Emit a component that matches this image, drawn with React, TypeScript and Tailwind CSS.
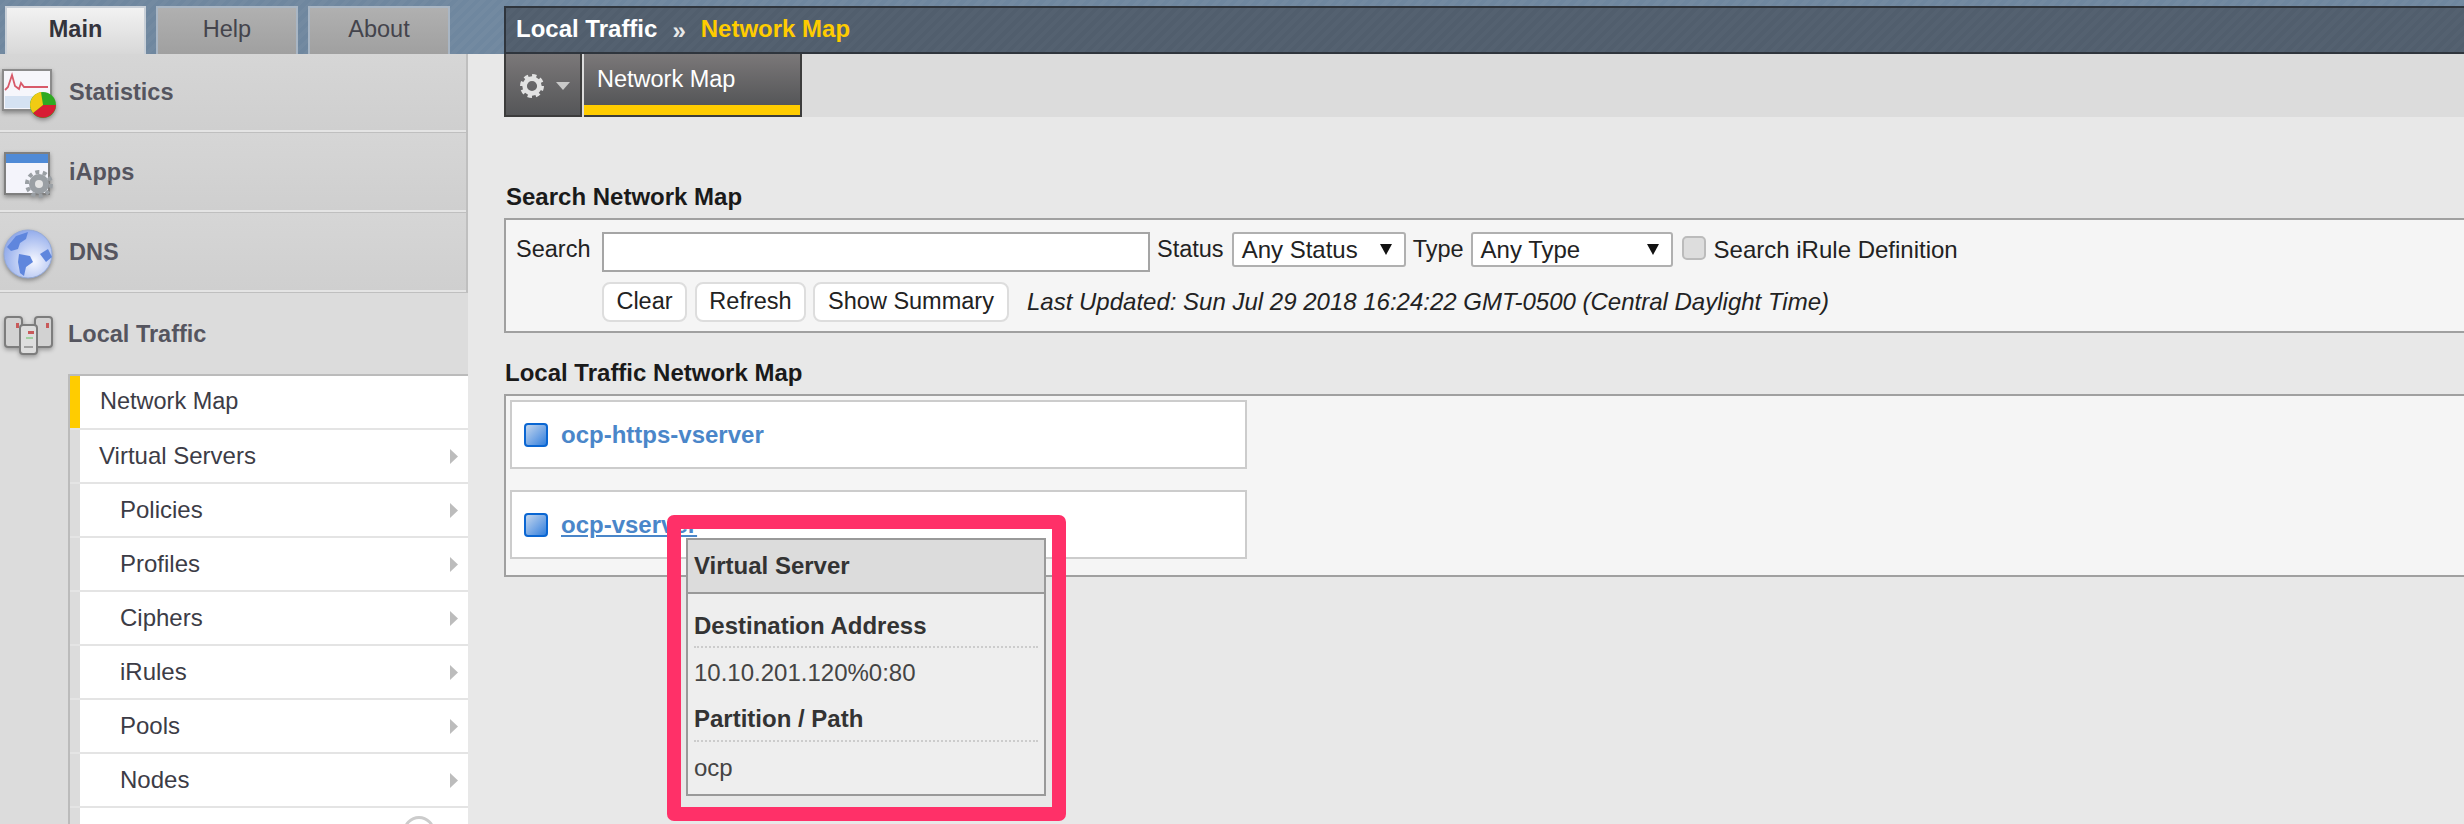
const font = "font-['Liberation_Sans',Arial,sans-serif]";

const stripes =
  "bg-[repeating-linear-gradient(135deg,#6f879f_0px,#6f879f_4px,#738aa1_4px,#738aa1_8px)]";
const headStripes =
  "bg-[repeating-linear-gradient(135deg,#515e6d_0px,#515e6d_4px,#546170_4px,#546170_8px)]";

const navItems = ["Policies", "Profiles", "Ciphers", "iRules", "Pools", "Nodes"];

function StatsIcon() {
  return (
    <svg width="58" height="52" viewBox="0 0 58 52" className="shrink-0 drop-shadow-[0_2px_2px_rgba(0,0,0,0.35)]">
      <rect x="3" y="3" width="48" height="40" fill="#f6f6fb" stroke="#8b8b8b" strokeWidth="2" />
      <rect x="5" y="29" width="44" height="12" fill="#d5e2f2" />
      <path d="M5 23 L8 20 L12 8 L15 19 L19 22 L21 16 L24 20 L48 20" fill="none" stroke="#d85a6a" strokeWidth="1.8" />
      <circle cx="43" cy="38" r="13" fill="#2faa22" />
      <path d="M43 38 L56 38 A13 13 0 0 1 33 46 Z" fill="#d81c34" />
      <path d="M43 38 L33 46 A13 13 0 0 1 41 25 Z" fill="#f1cb14" />
    </svg>
  );
}

function AppsIcon() {
  return (
    <svg width="58" height="52" viewBox="0 0 58 52" className="shrink-0 drop-shadow-[0_2px_2px_rgba(0,0,0,0.35)]">
      <rect x="5" y="6" width="44" height="41" fill="#f4f4fb" stroke="#7f7f7f" strokeWidth="2" />
      <rect x="6" y="7" width="42" height="9" fill="#4f8ad6" />
      <circle cx="39" cy="37" r="10" fill="#9a9fa4" />
      <circle cx="39" cy="37" r="12" fill="none" stroke="#9a9fa4" strokeWidth="4" strokeDasharray="4 3.5" />
      <circle cx="39" cy="37" r="4" fill="#e4e4e4" />
    </svg>
  );
}

function GlobeIcon() {
  return (
    <svg width="58" height="52" viewBox="0 0 58 52" className="shrink-0 drop-shadow-[0_2px_2px_rgba(0,0,0,0.35)]">
      <defs>
        <radialGradient id="globe" cx="0.62" cy="0.65" r="0.7">
          <stop offset="0" stopColor="#f5f7ff" />
          <stop offset="1" stopColor="#8ba6ea" />
        </radialGradient>
      </defs>
      <circle cx="28" cy="27" r="24" fill="url(#globe)" stroke="#93a9d8" strokeWidth="1" />
      <path d="M7 20 L16 9 L28 5 L26 12 L20 16 L18 22 L11 24 Z" fill="#5f86dd" />
      <path d="M19 27 L30 29 L33 35 L26 40 L24 49 L20 46 L18 35 Z" fill="#5f86dd" />
      <path d="M40 27 L48 22 L52 30 L46 35 Z" fill="#5f86dd" />
    </svg>
  );
}

function ServersIcon() {
  return (
    <svg width="58" height="52" viewBox="0 0 58 52" className="shrink-0 drop-shadow-[0_2px_2px_rgba(0,0,0,0.3)]">
      <rect x="5" y="8" width="17" height="30" rx="3" fill="#d2d2d2" stroke="#7d7d7d" strokeWidth="2" />
      <rect x="35" y="8" width="17" height="30" rx="3" fill="#d2d2d2" stroke="#7d7d7d" strokeWidth="2" />
      <rect x="20" y="16" width="17" height="29" rx="3" fill="#dedede" stroke="#7d7d7d" strokeWidth="2" />
      <rect x="16" y="14" width="3" height="5" fill="#c85a5a" />
      <rect x="46" y="14" width="3" height="5" fill="#c85a5a" />
      <rect x="28" y="22" width="6" height="3" fill="#c85a5a" />
      <rect x="26" y="28" width="7" height="2" fill="#9fcf9f" />
      <rect x="24" y="37" width="9" height="2" fill="#a0a0a0" />
    </svg>
  );
}

function GearIcon() {
  return (
    <svg width="24" height="24" viewBox="0 0 26 26">
      <circle cx="13" cy="13" r="8" fill="none" stroke="#e2e2e2" strokeWidth="5" />
      <circle cx="13" cy="13" r="11" fill="none" stroke="#e2e2e2" strokeWidth="4" strokeDasharray="4.6 4" />
    </svg>
  );
}

function SideItem({ label, icon, height }: { label: string; icon: React.ReactNode; height: string }) {
  return (
    <div className={`border-b border-r-2 border-[#bfbfbf] ${height}`}>
      <div className="flex h-full items-center border-b-2 border-[#e4e4e4] bg-gradient-to-b from-[#d6d6d6] to-[#cfcfcf] pt-[2px]">
        {icon}
        <span className="ml-[11px] text-[23.5px] font-bold text-[#55555f]">{label}</span>
      </div>
    </div>
  );
}

function NavRow({ label, indent, active }: { label: string; indent?: boolean; active?: boolean }) {
  return (
    <div className="flex h-[54px] border-b-2 border-[#e4e4e4]">
      <div className={`w-[10px] shrink-0 ${active ? "bg-[#ffcc00]" : ""}`} />
      <div
        className={`flex flex-1 items-center justify-between bg-white pr-[10px] text-[24px] text-[#3c3c46] ${
          indent ? "pl-[40px]" : active ? "pl-[20px]" : "pl-[19px]"
        }`}
      >
        <span className={active ? "text-[23.5px]" : ""}>{label}</span>
        {!active && (
          <svg width="8" height="15" viewBox="0 0 8 15">
            <path d="M0 0 L8 7.5 L0 15 Z" fill="#bcbcbc" />
          </svg>
        )}
      </div>
    </div>
  );
}

function MapCard({ name, underline, children }: { name: string; underline?: boolean; children?: React.ReactNode }) {
  return (
    <div className="relative flex h-[69px] w-[737px] items-center border-2 border-[#cccccc] bg-white pl-[12px]">
      <span className="h-[24px] w-[24px] rounded-[4px] border-2 border-[#0a66d2] bg-gradient-to-br from-[#c4d6ec] to-[#2f7fdc]" />
      <a className={`ml-[13px] text-[24px] font-bold text-[#4a86c9] ${underline ? "underline" : ""}`}>{name}</a>
      {children}
    </div>
  );
}

function Select({ label, width }: { label: string; width: string }) {
  return (
    <div className={`flex h-[35px] items-center justify-between rounded-[3px] border-2 border-[#b0b0b0] bg-white pl-[8px] pr-[12px] text-[24px] text-[#222] ${width}`}>
      <span>{label}</span>
      <svg width="12" height="11" viewBox="0 0 12 11">
        <path d="M0 0 H12 L6 11 Z" fill="#111" />
      </svg>
    </div>
  );
}

function Btn({ label, width }: { label: string; width: string }) {
  return (
    <button className={`h-[40px] rounded-[8px] border-2 border-[#dddddd] bg-white text-center text-[23.5px] text-[#222] ${width}`}>
      {label}
    </button>
  );
}

function Tip() {
  return (
    <>
      {/* pink rectangle is an annotation drawn over the screenshot */}
      <div className="absolute left-[155px] top-[23px] h-[306px] w-[399px] rounded-[7px] border-[14px] border-[#ff3068]" />
      <div className="absolute left-[174px] top-[46px] h-[258px] w-[360px] border-2 border-[#999] bg-[#eeeeee] text-[24px] text-[#444]">
        <div className="flex h-[54px] items-center border-b-2 border-[#999] bg-[#dcdcdc] pl-[6px] font-bold text-[#333]">
          Virtual Server
        </div>
        <div className="px-[6px]">
          <div className="mt-[12px] flex h-[42px] items-center border-b-2 border-dotted border-[#ccc] font-bold text-[#333]">
            Destination Address
          </div>
          <div className="flex h-[50px] items-center">10.10.201.120%0:80</div>
          <div className="flex h-[44px] items-center border-b-2 border-dotted border-[#ccc] font-bold text-[#333]">
            Partition / Path
          </div>
          <div className="flex h-[52px] items-center">ocp</div>
        </div>
      </div>
    </>
  );
}

export default function App() {
  return (
    <div className={`relative flex h-[824px] w-[2464px] flex-col overflow-hidden bg-[#e8e8e8] ${font}`}>
      <div className={`flex h-[54px] shrink-0 items-end ${stripes}`}>
        <div className="flex w-[504px] shrink-0 items-end pl-[5px]">
          <div className="flex h-[48px] w-[141px] items-center justify-center border-x-2 border-t-2 border-[#c9d0d8] bg-gradient-to-b from-[#f2f2f2] to-[#d8d8d8] pb-[3px] text-[23.5px] font-bold text-[#33333c]">
            Main
          </div>
          <div className="ml-[10px] flex h-[48px] w-[142px] items-center justify-center border-x-2 border-t-2 border-[#a9b6c4] bg-gradient-to-b from-[#b0b0b0] to-[#a0a0a0] pb-[3px] text-[23.5px] text-[#44444c]">
            Help
          </div>
          <div className="ml-[10px] flex h-[48px] w-[142px] items-center justify-center border-x-2 border-t-2 border-[#a9b6c4] bg-gradient-to-b from-[#b0b0b0] to-[#a0a0a0] pb-[3px] text-[23.5px] text-[#44444c]">
            About
          </div>
        </div>
        <div className={`flex h-[48px] flex-1 items-center border-y-2 border-l-2 border-[#2f353d] pb-[2px] pl-[10px] text-[24px] font-bold ${headStripes}`}>
          <span className="text-white">Local Traffic</span>
          <span className="ml-[15px] pt-[3px] text-[#e8e8e8]">»</span>
          <span className="ml-[15px] text-[#ffcc00]">Network Map</span>
        </div>
      </div>

      <div className="flex flex-1">
        <div className="w-[468px] shrink-0">
          <SideItem label="Statistics" height="h-[79px]" icon={<StatsIcon />} />
          <SideItem label="iApps" height="h-[80px]" icon={<AppsIcon />} />
          <SideItem label="DNS" height="h-[80px]" icon={<GlobeIcon />} />
          <div className="bg-[#dcdcdc]">
            <div className="flex h-[81px] items-center pt-[2px]">
              <ServersIcon />
              <span className="ml-[10px] text-[23.5px] font-bold text-[#55555f]">Local Traffic</span>
            </div>
            <div className="ml-[68px] border-l-2 border-t-2 border-[#bbbbbb]">
              <NavRow label="Network Map" active />
              <NavRow label="Virtual Servers" />
              {navItems.map((n) => (
                <NavRow key={n} label={n} indent />
              ))}
              <div className="flex h-[54px]">
                <div className="w-[10px] shrink-0" />
                <div className="flex flex-1 justify-end bg-white pr-[33px] pt-[8px]">
                  <span className="h-[32px] w-[32px] rounded-full border-[3px] border-[#cccccc]" />
                </div>
              </div>
            </div>
          </div>
        </div>

        <div className="ml-[36px] flex-1">
          <div className="flex h-[63px] bg-[#dcdcdc]">
            <div className="flex w-[78px] items-center gap-[12px] border-x-2 border-b-2 border-[#3c3c3c] bg-gradient-to-b from-[#7b7879] to-[#555658] pl-[14px] pt-[3px]">
              <GearIcon />
              <svg width="14" height="8" viewBox="0 0 14 8">
                <path d="M0 0 H14 L7 8 Z" fill="#c9c9c9" />
              </svg>
            </div>
            <div className="ml-[2px] flex w-[218px] flex-col border-b-2 border-r-2 border-[#3c3c3c]">
              <div className="flex flex-1 items-start bg-gradient-to-b from-[#7b7879] to-[#555658] pl-[13px] pt-[8px] text-[23.5px] text-white">
                Network Map
              </div>
              <div className="h-[10px] bg-[#ffcc00]" />
            </div>
          </div>

          <div className="ml-[2px] mt-[66px] text-[24px] font-bold leading-[28px] text-[#1a1a1a]">Search Network Map</div>
          <div className="mt-[7px] h-[115px] border-y-2 border-l-2 border-[#a0a0a0] bg-[#f5f5f5] pl-[10px] pt-[12px]">
            <div className="flex items-start text-[23.5px] text-[#222]">
              <span className="w-[86px] shrink-0">Search</span>
              <input className="h-[40px] w-[548px] border-2 border-[#a5a5a5] bg-white" />
              <span className="ml-[7px]">Status</span>
              <div className="ml-[8px]"><Select label="Any Status" width="w-[174px]" /></div>
              <span className="ml-[7px]">Type</span>
              <div className="ml-[7px]"><Select label="Any Type" width="w-[202px]" /></div>
              <span className="ml-[9px] mt-[4px] h-[24px] w-[24px] rounded-[5px] border-2 border-[#bbbbbb] bg-[#dddddd]" />
              <span className="ml-[8px] text-[24px]">Search iRule Definition</span>
            </div>
            <div className="ml-[86px] mt-[10px] flex items-center">
              <Btn label="Clear" width="w-[85px]" />
              <div className="ml-[8px]"><Btn label="Refresh" width="w-[111px]" /></div>
              <div className="ml-[7px]"><Btn label="Show Summary" width="w-[196px]" /></div>
              <span className="ml-[18px] text-[24px] italic text-[#222]">
                Last Updated: Sun Jul 29 2018 16:24:22 GMT-0500 (Central Daylight Time)
              </span>
            </div>
          </div>

          <div className="ml-[1px] mt-[26px] text-[24px] font-bold leading-[28px] text-[#1a1a1a]">Local Traffic Network Map</div>
          <div className="mt-[7px] h-[183px] border-y-2 border-l-2 border-[#a0a0a0] bg-[#f5f5f5] pl-[4px] pt-[4px]">
            <MapCard name="ocp-https-vserver" />
            <div className="mt-[21px]">
              <MapCard name="ocp-vserver" underline>
                <Tip />
              </MapCard>
            </div>
          </div>
        </div>
      </div>
    </div>
  );
}
